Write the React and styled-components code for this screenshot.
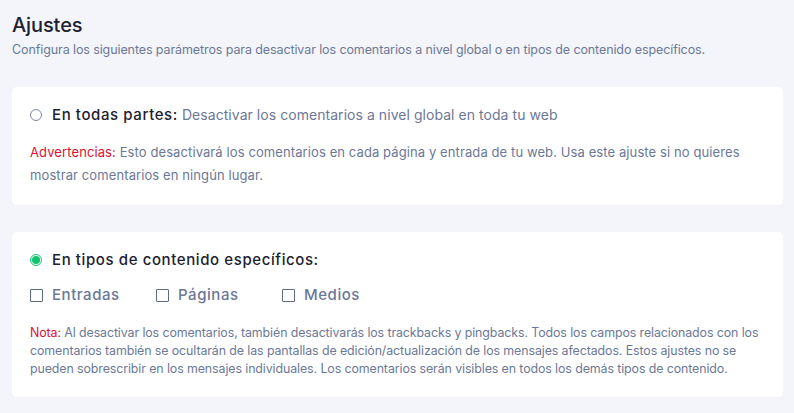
import React, { useState } from "react";
import styled, { createGlobalStyle } from "styled-components";

const Global = createGlobalStyle`
  html, body { margin: 0; padding: 0; background: #f4f5fa; }
  body { font-family: "Inter", "Noto Sans", sans-serif; -webkit-font-smoothing: antialiased; }
`;

const Page = styled.div`
  padding: 11px 12px 16px 12px;
  display: flex;
  flex-direction: column;
`;

const Title = styled.h1`
  margin: 0;
  font-size: 20px;
  font-weight: 500;
  color: #1d2130;
  line-height: 28px;
  letter-spacing: -0.1px;
`;

const Subtitle = styled.p`
  margin: 2px 0 0 0;
  font-size: 12.5px;
  line-height: 18px;
  color: #6b7897;
  letter-spacing: -0.1px;
`;

const Cards = styled.div`
  display: flex;
  flex-direction: column;
  gap: 27px;
  margin-top: 28px;
  margin-right: -1px;
`;

const Card = styled.section`
  background: #ffffff;
  border-radius: 5px;
  padding: ${(p) => p.$pad};
  display: flex;
  flex-direction: column;
`;

const OptionRow = styled.label`
  display: flex;
  align-items: center;
  gap: 10px;
  cursor: pointer;
`;

const Radio = styled.span`
  width: 12px;
  height: 12px;
  box-sizing: border-box;
  border-radius: 50%;
  border: 1px solid ${(p) => (p.$checked ? "#0fc26e" : "#7c86a0")};
  flex: none;
  display: flex;
  align-items: center;
  justify-content: center;
  background: #fff;
  &::after {
    content: "";
    width: 8px;
    height: 8px;
    border-radius: 50%;
    background: ${(p) => (p.$checked ? "#0fc26e" : "transparent")};
  }
`;

const OptionTitle = styled.span`
  font-size: 15px;
  line-height: 20px;
  font-weight: 500;
  color: #1d2130;
  letter-spacing: 0.6px;
`;

const OptionDesc = styled.span`
  font-size: 14px;
  font-weight: 400;
  color: #6b7897;
  margin-left: 4px;
  letter-spacing: 0.05px;
`;

const Notice = styled.p`
  margin: ${(p) => p.$margin};
  font-size: ${(p) => p.$size}px;
  line-height: ${(p) => p.$lh};
  color: #6b7897;
  letter-spacing: ${(p) => p.$ls}px;
`;

const Label = styled.span`
  color: #e0102f;
`;

const CheckGroup = styled.div`
  display: flex;
  align-items: center;
  margin-top: 15px;
`;

const CheckItem = styled.label`
  display: flex;
  align-items: center;
  gap: 9px;
  width: ${(p) => p.$w}px;
  cursor: pointer;
`;

const Box = styled.span`
  width: 13px;
  height: 13px;
  box-sizing: border-box;
  border: 1px solid #5d6a87;
  border-radius: 1px;
  flex: none;
  background: #fff;
`;

const CheckText = styled.span`
  font-size: 15px;
  line-height: 20px;
  font-weight: 500;
  color: #6b7897;
  letter-spacing: 0.55px;
`;

export default function App() {
  const [mode] = useState("specific");
  return (
    <>
      <Global />
      <Page>
        <Title>Ajustes</Title>
        <Subtitle>
          Configura los siguientes parámetros para desactivar los comentarios a nivel global o en tipos de contenido específicos.
        </Subtitle>
        <Cards>
          <Card $pad="18px 18px 18px 18px">
            <OptionRow>
              <Radio $checked={mode === "all"} />
              <OptionTitle>
                En todas partes:
                <OptionDesc>Desactivar los comentarios a nivel global en toda tu web</OptionDesc>
              </OptionTitle>
            </OptionRow>
            <Notice $margin="16px 0 0 0" $lh="23px" $size={13} $ls={0.1}>
              <Label>Advertencias:</Label> Esto desactivará los comentarios en cada página y entrada de tu web. Usa este ajuste si no quieres mostrar comentarios en ningún lugar.
            </Notice>
          </Card>
          <Card $pad="18px 18px 19px 18px">
            <OptionRow>
              <Radio $checked={mode === "specific"} />
              <OptionTitle>En tipos de contenido específicos:</OptionTitle>
            </OptionRow>
            <CheckGroup>
              <CheckItem $w={126}>
                <Box />
                <CheckText>Entradas</CheckText>
              </CheckItem>
              <CheckItem $w={126}>
                <Box />
                <CheckText>Páginas</CheckText>
              </CheckItem>
              <CheckItem $w={126}>
                <Box />
                <CheckText>Medios</CheckText>
              </CheckItem>
            </CheckGroup>
            <Notice $margin="19px 0 0 0" $lh="18px" $size={12.4} $ls={-0.1}>
              <Label>Nota:</Label> Al desactivar los comentarios, también desactivarás los trackbacks y pingbacks. Todos los campos relacionados con los comentarios también se ocultarán de las pantallas de edición/actualización de los mensajes afectados. Estos ajustes no se pueden sobrescribir en los mensajes individuales. Los comentarios serán visibles en todos los demás tipos de contenido.
            </Notice>
          </Card>
        </Cards>
      </Page>
    </>
  );
}
